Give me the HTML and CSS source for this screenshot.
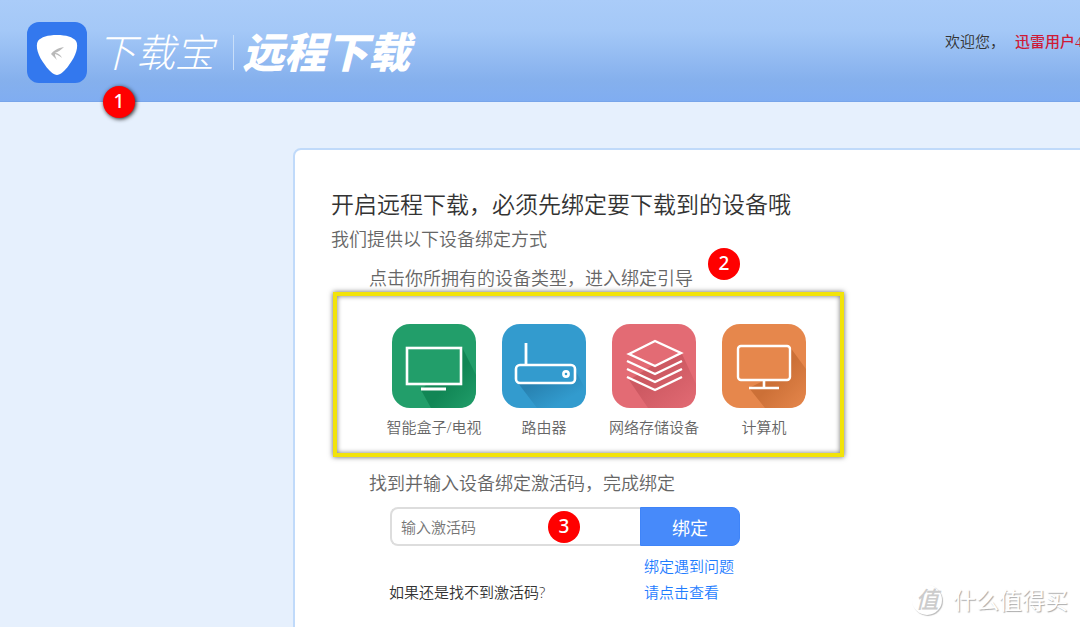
FILE: index.html
```html
<!DOCTYPE html>
<html lang="zh-CN">
<head>
<meta charset="utf-8">
<title>下载宝 远程下载</title>
<link rel="stylesheet" href="styles.css">
</head>
<body>
<header class="header">
  <svg class="logo" viewBox="0 0 60 61" aria-hidden="true">
    <rect width="60" height="61" rx="12" fill="#3378ee"/>
    <path d="M30 13C39 13 46 15 49 19C52 24 49 34 42 43C38 49 33 53 30 53C27 53 22 49 18 43C11 34 8 24 11 19C14 15 21 13 30 13Z" fill="#fff"/>
    <path d="M37 25C31 26 26 29 24 32L30 38C28 34 28 33 28 32C31 33 33 34 35 36C34 33 31 31 28 31C31 30 34 28 37 25Z" fill="#b9b9b9"/>
  </svg>
  <div class="brand">
    <span class="brand-name">下载宝</span>
    <span class="brand-line"></span>
    <span class="brand-product">远程下载</span>
  </div>
  <div class="welcome"><span>欢迎您，</span><strong class="user">迅雷用户4</strong></div>
  <span class="mark mark-one">1</span>
</header>
<main class="panel">
  <h1 class="title">开启远程下载，必须先绑定要下载到的设备哦</h1>
  <p class="subtitle">我们提供以下设备绑定方式</p>
  <p class="step">点击你所拥有的设备类型，进入绑定引导<span class="mark mark-two">2</span></p>
  <div class="devices">
    <button class="device" type="button">
      <svg class="device-icon" viewBox="0 0 84 84" aria-hidden="true">
        <defs><linearGradient id="g1" x1="0" y1="0" x2="1" y2="1"><stop offset=".55" stop-color="#118655"/><stop offset="1" stop-color="#219e6a"/></linearGradient></defs>
        <rect width="84" height="84" rx="18" fill="#229e6a"/>
        <path d="M70 23L84 51V66Q84 84 66 84H39L29 66L34 61H70Z" fill="url(#g1)"/>
        <rect x="15" y="24" width="54" height="36" fill="#229e6a" stroke="#fff" stroke-width="2.6"/>
        <path d="M29 65H54" stroke="#fff" stroke-width="3"/>
      </svg>
      <span>智能盒子/电视</span>
    </button>
    <button class="device" type="button">
      <svg class="device-icon" viewBox="0 0 84 84" aria-hidden="true">
        <defs><linearGradient id="g2" x1="0" y1="0" x2="1" y2="1"><stop offset=".3" stop-color="#2882b1"/><stop offset=".75" stop-color="#329bce"/></linearGradient></defs>
        <rect width="84" height="84" rx="18" fill="#339bce"/>
        <path d="M16 59H73V46L84 66Q84 84 66 84H35Z" fill="url(#g2)"/>
        <rect x="14" y="41" width="59" height="18" rx="4" fill="#339bce" stroke="#fff" stroke-width="2.6"/>
        <path d="M24 41V19" stroke="#fff" stroke-width="2.8"/>
        <circle cx="64" cy="50" r="2.6" fill="none" stroke="#fff" stroke-width="2.6"/>
      </svg>
      <span>路由器</span>
    </button>
    <button class="device" type="button">
      <svg class="device-icon" viewBox="0 0 84 84" aria-hidden="true">
        <defs><linearGradient id="g3" x1="0" y1="0" x2="1" y2="1"><stop offset=".4" stop-color="#cd5962"/><stop offset="1" stop-color="#e36b74"/></linearGradient></defs>
        <rect width="84" height="84" rx="18" fill="#e36b74"/>
        <path d="M70 30L84 60V66Q84 84 66 84H36L17 56L43 40Z" fill="url(#g3)"/>
        <path d="M17 30L43 17L69 29L43 42Z" fill="#e36b74"/>
        <path d="M17 30L43 17L69 29L43 42ZM15 37L43 50L70 37M15 45L43 58L70 45M15 53L43 66L70 53" fill="none" stroke="#fff" stroke-width="2.4"/>
      </svg>
      <span>网络存储设备</span>
    </button>
    <button class="device" type="button">
      <svg class="device-icon" viewBox="0 0 84 84" aria-hidden="true">
        <defs><linearGradient id="g4" x1="0" y1="0" x2="1" y2="1"><stop offset=".5" stop-color="#cc7037"/><stop offset="1" stop-color="#e6874c"/></linearGradient></defs>
        <rect width="84" height="84" rx="18" fill="#e6874c"/>
        <path d="M68 23L84 45V66Q84 84 66 84H43L27 64L43 56H68Z" fill="url(#g4)"/>
        <rect x="16" y="22" width="52" height="34" rx="3" fill="#e6874c" stroke="#fff" stroke-width="2.4"/>
        <path d="M42 56V63M27 64H57" stroke="#fff" stroke-width="2.6"/>
      </svg>
      <span>计算机</span>
    </button>
  </div>
  <label class="step step-code" for="code">找到并输入设备绑定激活码，完成绑定</label>
  <form class="bind">
    <input class="code" id="code" type="text" placeholder="输入激活码">
    <button class="submit" type="button">绑定</button>
    <span class="mark mark-three">3</span>
  </form>
  <div class="help">
    <span class="question">如果还是找不到激活码?</span>
    <div class="links">
      <a href="#">绑定遇到问题</a>
      <a href="#">请点击查看</a>
    </div>
  </div>
</main>
<div class="watermark"><span class="seal">值</span><span>什么值得买</span></div>
</body>
</html>
```
FILE: styles.css
```css
* { box-sizing: border-box; }
html { height: 100%; }
body {
  margin: 0;
  min-height: 100%;
  display: flex;
  flex-direction: column;
  position: relative;
  overflow: hidden;
  background: #e6f0fd;
  color: #333;
  font-family: "Open Sans", "Noto Sans CJK SC", sans-serif;
  font-weight: 350;
}
button, input { font: inherit; }
.header {
  position: relative;
  display: flex;
  align-items: flex-start;
  height: 102px;
  padding: 22px 0 0 27px;
  background: linear-gradient(#aaccf9, #a4c8f7 30%, #85b0ed 80%, #80adf1);
  border-bottom: 1px solid #78a5ea;
}
.logo { width: 60px; height: 61px; flex: none; }
.brand {
  display: flex;
  align-items: center;
  margin-left: 10px;
  height: 60px;
  color: #fff;
  font-family: "Noto Sans CJK SC", sans-serif;
  font-style: italic;
  line-height: 56px;
  white-space: nowrap;
}
.brand-name { font-size: 39px; font-weight: 300; line-height: 54px; padding-bottom: 4px; }
.brand-line { width: 1px; height: 35px; margin: 0 8px 0 19px; background: #c8def9; }
.brand-product { font-size: 42px; font-weight: 900; padding-bottom: 4px; }
.welcome {
  display: flex;
  gap: 10px;
  width: 135px;
  margin: 9px 0 0 auto;
  overflow: hidden;
  white-space: nowrap;
  font-family: "Liberation Serif", "Noto Sans CJK SC", serif;
  font-size: 15px;
  line-height: 22px;
}
.user { color: #cf1a36; font-weight: 500; }
.mark {
  position: absolute;
  width: 32px;
  height: 32px;
  border-radius: 50%;
  background: #f00;
  color: #fff;
  font-family: "Noto Sans", sans-serif;
  font-size: 19px;
  font-weight: 500;
  line-height: 30px;
  text-align: center;
}
.mark-one { left: 103px; top: 86px; box-shadow: 1px 1px 4px #222; z-index: 1; }
.mark-two { left: 339px; top: -16px; }
.mark-three { left: 158px; top: 4px; }
.panel {
  flex: 1;
  margin: 46px -10px -10px 293px;
  padding: 36px 0 20px 36px;
  border: 2px solid #c0dafa;
  border-radius: 8px;
  background: #fff;
}
.title { margin: 0; font-size: 23px; line-height: 36px; font-weight: 350; }
.subtitle { margin: 0; font-size: 18px; line-height: 34px; color: #666; }
.step {
  position: relative;
  display: block;
  width: max-content;
  margin: 8px 0 0 38px;
  font-size: 18px;
  line-height: 28px;
  color: #666;
}
.devices {
  display: flex;
  gap: 10px;
  width: 511px;
  height: 165px;
  margin: 0 0 0 2px;
  padding: 28px 0 0 47px;
  border: 4px solid #f2e30a;
  box-shadow: 0 0 5px #666, inset 0 0 5px #777;
}
.device {
  display: flex;
  flex-direction: column;
  align-items: center;
  gap: 8px;
  width: 100px;
  padding: 0;
  border: 0;
  background: none;
  color: #666;
  font-size: 15px;
  line-height: 22px;
  white-space: nowrap;
}
.device-icon { width: 84px; height: 84px; flex: none; }
.step-code { margin-top: 12px; }
.bind { position: relative; display: flex; width: 350px; margin: 10px 0 0 59px; }
.code {
  flex: 1;
  min-width: 0;
  height: 39px;
  padding: 0 9px;
  border: 2px solid #ddd;
  border-right: 0;
  border-radius: 8px 0 0 8px;
  background: #fff;
  font-size: 15px;
}
.code::placeholder { color: #757575; opacity: 1; }
.submit {
  width: 100px;
  border: 1px solid #3f84f8;
  border-radius: 0 8px 8px 0;
  background: #478afa;
  color: #fff;
  font-size: 18px;
  font-weight: 400;
  padding: 0;
}
.help {
  display: flex;
  align-items: flex-end;
  justify-content: space-between;
  width: 345px;
  margin: 7px 0 0 58px;
  font-size: 15px;
  line-height: 26px;
}
.links { display: flex; flex-direction: column; }
.links a { color: #1f7dff; text-decoration: none; }
.watermark {
  position: absolute;
  right: 12px;
  bottom: 11px;
  display: flex;
  align-items: center;
  gap: 11px;
  color: #fff;
  font-size: 23px;
  line-height: 32px;
  font-weight: 400;
  text-shadow: 1px 1px 1px #aaa;
}
.seal {
  width: 30px;
  height: 30px;
  border-radius: 50%;
  box-shadow: 1px 1px 1px #bbb;
  color: #ccc;
  font-style: italic;
  font-weight: 500;
  line-height: 28px;
  text-align: center;
  text-shadow: none;
}
```
